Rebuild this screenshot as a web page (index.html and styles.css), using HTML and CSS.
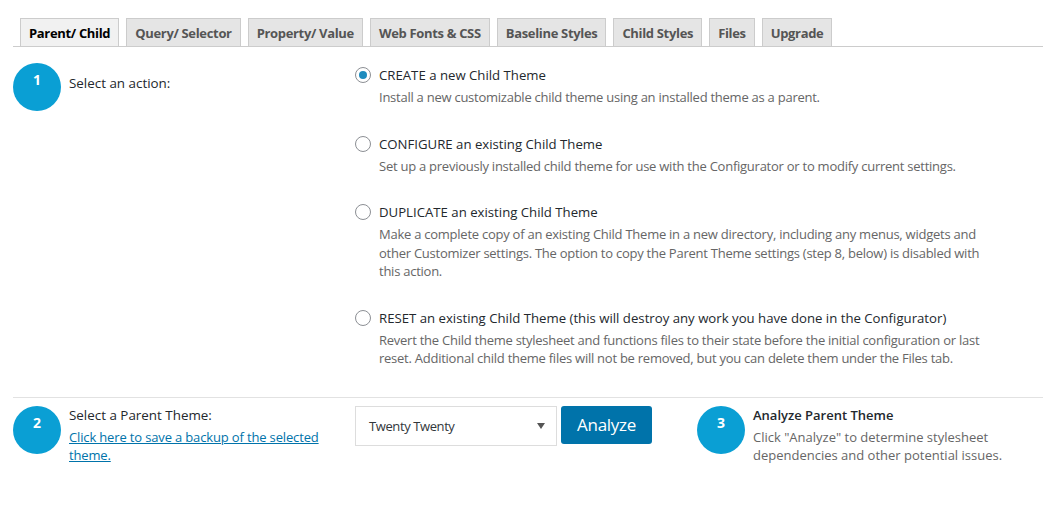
FILE: index.html
```html
<!DOCTYPE html>
<html>
<head>
<meta charset="utf-8">
<link rel="stylesheet" href="styles.css">
</head>
<body>
<div class="wrap">
  <nav class="tabs">
    <span class="tab active">Parent/ Child</span>
    <span class="tab">Query/ Selector</span>
    <span class="tab">Property/ Value</span>
    <span class="tab">Web Fonts &amp; CSS</span>
    <span class="tab">Baseline Styles</span>
    <span class="tab">Child Styles</span>
    <span class="tab">Files</span>
    <span class="tab">Upgrade</span>
  </nav>

  <section class="row row-actions">
    <div class="left">
      <div class="step">1</div>
      <div class="step-label label-1">Select an action:</div>
    </div>
    <div class="options">
      <div class="option">
        <div class="opt-title"><span class="radio checked"></span>CREATE a new Child Theme</div>
        <div class="opt-desc">Install a new customizable child theme using an installed theme as a parent.</div>
      </div>
      <div class="option">
        <div class="opt-title"><span class="radio"></span>CONFIGURE an existing Child Theme</div>
        <div class="opt-desc">Set up a previously installed child theme for use with the Configurator or to modify current settings.</div>
      </div>
      <div class="option">
        <div class="opt-title"><span class="radio"></span>DUPLICATE an existing Child Theme</div>
        <div class="opt-desc">Make a complete copy of an existing Child Theme in a new directory, including any menus, widgets and other Customizer settings. The option to copy the Parent Theme settings (step 8, below) is disabled with this action.</div>
      </div>
      <div class="option">
        <div class="opt-title"><span class="radio"></span>RESET an existing Child Theme (this will destroy any work you have done in the Configurator)</div>
        <div class="opt-desc">Revert the Child theme stylesheet and functions files to their state before the initial configuration or last reset. Additional child theme files will not be removed, but you can delete them under the Files tab.</div>
      </div>
    </div>
  </section>

  <section class="row row-parent">
    <div class="left">
      <div class="step">2</div>
      <div class="step-label label-2">
        <div>Select a Parent Theme:</div>
        <a class="link" href="#">Click here to save a backup of the selected theme.</a>
      </div>
    </div>
    <div class="controls">
      <div class="select"><span>Twenty Twenty</span><span class="arrow"></span></div>
      <button class="btn">Analyze</button>
      <div class="analyze">
        <div class="step">3</div>
        <div class="analyze-text">
          <div class="analyze-title">Analyze Parent Theme</div>
          <div class="analyze-desc">Click "Analyze" to determine stylesheet dependencies and other potential issues.</div>
        </div>
      </div>
    </div>
  </section>
</div>
</body>
</html>
```

FILE: styles.css
```css
* { box-sizing: border-box; }
body {
  margin: 0;
  background: #fff;
  font-family: "Open Sans", "Noto Sans", sans-serif;
  font-size: 13px;
  color: #32373c;
}
.wrap { padding-left: 13px; }

.tabs {
  display: flex;
  gap: 7px;
  margin-top: 18px;
  padding-left: 7px;
  border-bottom: 1px solid #ccc;
  height: 29px;
}
.tab {
  display: block;
  height: 28px;
  line-height: 29px;
  padding: 0 8px;
  background: #e5e5e5;
  border: 1px solid #ccc;
  border-bottom: none;
  font-weight: 700;
  font-size: 13px;
  color: #555;
  letter-spacing: -0.33px;
}
.tab.active {
  background: #f1f1f1;
  color: #000;
}

.row { display: flex; }
.left {
  width: 342px;
  flex: none;
  display: flex;
  gap: 8px;
}
.step {
  width: 48px;
  height: 48px;
  border-radius: 50%;
  background: #0a9fd4;
  color: #fff;
  font-weight: 700;
  font-size: 14px;
  line-height: 20px;
  padding-top: 7px;
  text-align: center;
  flex: none;
}
.step-label { color: #23282d; line-height: 20px; font-size: 13.4px; }
.label-1 { padding-top: 10px; }

.row-actions {
  padding-top: 16px;
  padding-bottom: 2px;
  border-bottom: 1px solid #e2e2e2;
}
.options { padding-top: 2px; width: 640px; }
.option { margin-bottom: 27px; }
.opt-title {
  display: flex;
  align-items: center;
  line-height: 20px;
  color: #23282d;
  font-size: 13.2px;
}
.radio {
  width: 16px;
  height: 16px;
  border: 1px solid #8c8f94;
  border-radius: 50%;
  margin-right: 8px;
  display: inline-flex;
  align-items: center;
  justify-content: center;
  flex: none;
  background: #fff;
}
.radio.checked::after {
  content: "";
  width: 8px;
  height: 8px;
  border-radius: 50%;
  background: #1e8cbe;
}
.opt-desc {
  margin-top: 3px;
  margin-left: 24px;
  line-height: 18.5px;
  color: #666;
  letter-spacing: -0.25px;
}

.row-parent { padding-top: 8px; }
.label-2 { line-height: 18px; }
.link {
  color: #0073aa;
  display: block;
  width: 260px;
  margin-top: 4px;
  font-size: 13px;
  letter-spacing: -0.15px;
}
.controls {
  display: flex;
  align-items: flex-start;
}
.select {
  width: 202px;
  height: 40px;
  border: 1px solid #ddd;
  display: flex;
  align-items: center;
  justify-content: space-between;
  padding: 0 11px 0 13px;
  color: #32373c;
  letter-spacing: -0.4px;
}
.arrow {
  width: 0; height: 0;
  border-left: 4px solid transparent;
  border-right: 4px solid transparent;
  border-top: 6px solid #555;
}
.btn {
  margin-left: 4px;
  width: 91px;
  height: 38px;
  background: #0073aa;
  border: none;
  border-radius: 3px;
  color: #fff;
  font-family: "Open Sans", "Noto Sans", sans-serif;
  font-size: 17px;
  letter-spacing: -0.3px;
  padding: 0;
}
.analyze {
  display: flex;
  gap: 8px;
  margin-left: 45px;
}
.analyze-text { line-height: 18px; }
.analyze-title { color: #23282d; font-weight: 600; }
.analyze-desc { color: #666; width: 250px; margin-top: 4px; }
```
